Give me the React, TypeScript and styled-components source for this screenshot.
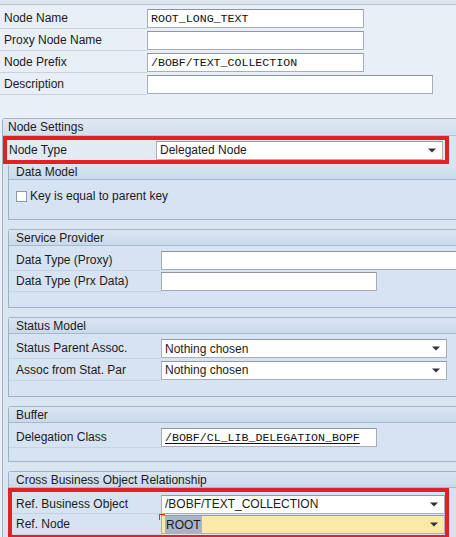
import React from "react";
import styled, { createGlobalStyle, css } from "styled-components";

const GlobalStyle = createGlobalStyle`
  html, body {
    margin: 0;
    padding: 0;
    background: #e9eff6;
    overflow: hidden;
  }
  body {
    font-family: "Liberation Sans", Arial, sans-serif;
    font-size: 12px;
    color: #1b1b1b;
  }
`;

const TOP_FIELDS = [
  { label: "Node Name", value: "ROOT_LONG_TEXT", width: 217 },
  { label: "Proxy Node Name", value: "", width: 217 },
  { label: "Node Prefix", value: "/BOBF/TEXT_COLLECTION", width: 217 },
  { label: "Description", value: "", width: 286 },
];

function Arrow() {
  return (
    <ArrowIcon width="8" height="5" viewBox="0 0 8 5">
      <path d="M0 0.5 H8 L4 4.5 Z" fill="#2f3338" />
    </ArrowIcon>
  );
}

export default function App() {
  return (
    <>
      <GlobalStyle />
      <Screen>
        <TopStrip />
        <TopForm>
          {TOP_FIELDS.map((f) => (
            <TopRow key={f.label}>
              <TopLabel>{f.label}</TopLabel>
              <TextField $w={f.width}>{f.value}</TextField>
            </TopRow>
          ))}
        </TopForm>

        <OuterPanel>
          <OuterHeader>Node Settings</OuterHeader>
          <NodeTypeBox>
            <NodeTypeLabel>Node Type</NodeTypeLabel>
            <Dropdown $w={287}>
              <DropText>Delegated Node</DropText>
              <Arrow />
            </Dropdown>
          </NodeTypeBox>

          <Group $first>
            <GroupHeader>Data Model</GroupHeader>
            <GroupBody $pt={8} $pb={15}>
              <CheckRow>
                <CheckBox />
                <span>Key is equal to parent key</span>
              </CheckRow>
            </GroupBody>
          </Group>

          <Group>
            <GroupHeader>Service Provider</GroupHeader>
            <GroupBody $pt={4} $pb={15}>
              <FieldRow>
                <FieldLabel>Data Type (Proxy)</FieldLabel>
                <TextField $w={320} />
              </FieldRow>
              <FieldRow>
                <FieldLabel>Data Type (Prx Data)</FieldLabel>
                <TextField $w={216} />
              </FieldRow>
            </GroupBody>
          </Group>

          <Group>
            <GroupHeader>Status Model</GroupHeader>
            <GroupBody $pt={4} $pb={15}>
              <FieldRow>
                <FieldLabel>Status Parent Assoc.</FieldLabel>
                <Dropdown $w={286}>
                  <DropText>Nothing chosen</DropText>
                  <Arrow />
                </Dropdown>
              </FieldRow>
              <FieldRow $h={22}>
                <FieldLabel>Assoc from Stat. Par</FieldLabel>
                <Dropdown $w={286}>
                  <DropText>Nothing chosen</DropText>
                  <Arrow />
                </Dropdown>
              </FieldRow>
            </GroupBody>
          </Group>

          <Group>
            <GroupHeader>Buffer</GroupHeader>
            <GroupBody $pt={4} $pb={13}>
              <FieldRow>
                <FieldLabel>Delegation Class</FieldLabel>
                <TextField $w={216} $link>
                  /BOBF/CL_LIB_DELEGATION_BOPF
                </TextField>
              </FieldRow>
            </GroupBody>
          </Group>

          <Group>
            <GroupHeader>Cross Business Object Relationship</GroupHeader>
            <RefBox>
              <FieldRow $h={20}>
                <RefLabel>Ref. Business Object</RefLabel>
                <Dropdown $w={284}>
                  <DropText>/BOBF/TEXT_COLLECTION</DropText>
                  <Arrow />
                </Dropdown>
              </FieldRow>
              <FieldRow $h={21}>
                <RefLabel>Ref. Node</RefLabel>
                <Dropdown $w={284} $focus>
                  <FocusMark />
                  <Selected>ROOT</Selected>
                  <Arrow />
                </Dropdown>
              </FieldRow>
            </RefBox>
          </Group>
        </OuterPanel>
      </Screen>
    </>
  );
}

const Screen = styled.div`
  width: 456px;
  height: 537px;
  overflow: hidden;
  background: #e9eff6;
`;

const TopStrip = styled.div`
  height: 4px;
  background: #dde5ee;
  border-bottom: 1px solid #b9c4d1;
`;

const TopForm = styled.div`
  padding-top: 2px;
  margin-bottom: 23px;
`;

const TopRow = styled.div`
  display: flex;
  align-items: center;
  height: 22px;
`;

const TopLabel = styled.div`
  box-sizing: border-box;
  width: 147px;
  height: 100%;
  padding-left: 4px;
  display: flex;
  align-items: center;
  border-bottom: 1px solid #c9d1db;
`;

const TextField = styled.div<{ $w: number; $link?: boolean }>`
  box-sizing: border-box;
  flex: none;
  width: ${(p) => p.$w}px;
  height: 19px;
  padding: 0 3px;
  display: flex;
  align-items: center;
  background: #fff;
  border: 1px solid #a7adb5;
  border-top-color: #8e959e;
  font-family: "Liberation Mono", "Courier New", monospace;
  font-size: 11.6px;
  color: #111;
  white-space: nowrap;
  ${(p) =>
    p.$link &&
    css`
      text-decoration: underline;
      text-underline-offset: 2px;
    `}
`;

const OuterPanel = styled.div`
  margin-left: 2px;
  border: 1px solid #a3b3c6;
  border-right: none;
  border-bottom: none;
  border-top-left-radius: 3px;
  background: #dae5f2;
  padding-bottom: 20px;
`;

const OuterHeader = styled.div`
  height: 16px;
  padding-left: 5px;
  display: flex;
  align-items: center;
  background: linear-gradient(#dfe8f3, #d2dfee);
  border-bottom: 1px solid #b3c2d4;
`;

const NodeTypeBox = styled.div`
  box-sizing: border-box;
  width: 446px;
  height: 28px;
  border: 4px solid #e1212a;
  display: flex;
  align-items: center;
  background: #e2eaf4;
`;

const NodeTypeLabel = styled.div`
  width: 147px;
  padding-left: 2px;
`;

const Group = styled.div<{ $first?: boolean }>`
  margin-left: 5px;
  margin-top: ${(p) => (p.$first ? 0 : 9)}px;
  border: 1px solid #a0b1c5;
  border-right: none;
  border-top-left-radius: 3px;
  background: #d6e3f2;
  ${(p) =>
    p.$first &&
    css`
      border-top: none;
    `}
`;

const GroupHeader = styled.div`
  height: 15px;
  padding-left: 7px;
  display: flex;
  align-items: center;
  background: linear-gradient(#dae5f2, #c9d9ec);
  border-bottom: 1px solid #a8b9cc;
`;

const GroupBody = styled.div<{ $pt: number; $pb: number }>`
  padding: ${(p) => p.$pt}px 0 ${(p) => p.$pb}px 0;
`;

const CheckRow = styled.div`
  display: flex;
  align-items: center;
  gap: 3px;
  padding-left: 7px;
  height: 16px;
`;

const CheckBox = styled.div`
  width: 11px;
  height: 11px;
  box-sizing: border-box;
  background: #fff;
  border: 1px solid #8f98a3;
`;

const FieldRow = styled.div<{ $h?: number }>`
  display: flex;
  align-items: center;
  height: ${(p) => p.$h ?? 21}px;
`;

const FieldLabel = styled.div`
  box-sizing: border-box;
  flex: none;
  width: 152px;
  height: 100%;
  padding-left: 7px;
  display: flex;
  align-items: center;
  border-bottom: 1px solid #c4d2e2;
`;

const RefBox = styled.div`
  box-sizing: border-box;
  width: 441px;
  margin-left: -1px;
  border: 4px solid #e1212a;
  padding-top: 2px;
  background: #d6e3f2;
`;

const RefLabel = styled(FieldLabel)`
  width: 149px;
  padding-left: 4px;
`;

const Dropdown = styled.div<{ $w: number; $focus?: boolean }>`
  position: relative;
  box-sizing: border-box;
  flex: none;
  width: ${(p) => p.$w}px;
  height: 19px;
  padding: 0 6px 0 3px;
  display: flex;
  align-items: center;
  justify-content: space-between;
  background: ${(p) => (p.$focus ? "#fbeaa3" : "#fff")};
  border: 1px solid #a9b0b8;
  border-top-color: #939aa3;
`;

const DropText = styled.span`
  white-space: nowrap;
  color: #1b1b1b;
`;

const Selected = styled.span`
  background: #a7b5c6;
  padding: 1px 1px;
  color: #1b1b1b;
  line-height: 16px;
`;

const ArrowIcon = styled.svg`
  flex: none;
`;

const FocusMark = styled.div`
  position: absolute;
  left: -3px;
  top: -2px;
  width: 5px;
  height: 5px;
  border-top: 1px solid #d2332e;
  border-left: 1px solid #d2332e;
`;
